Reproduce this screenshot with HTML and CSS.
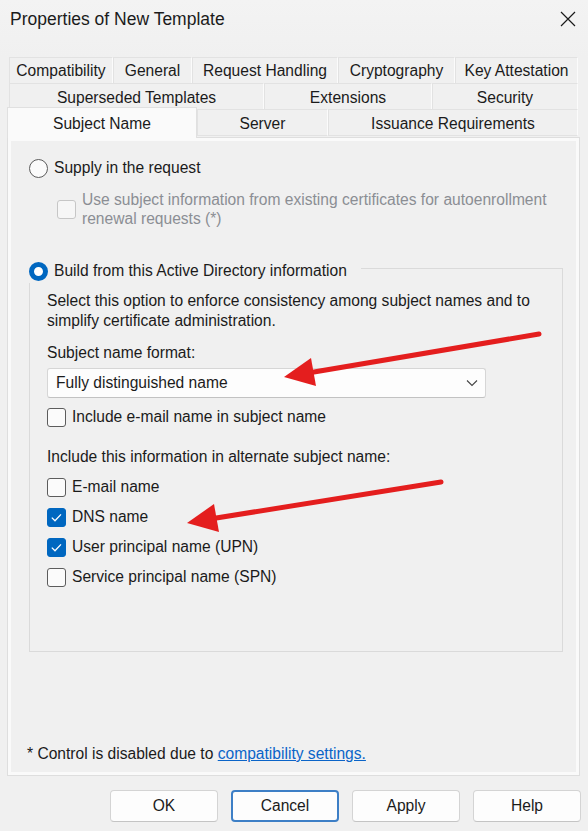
FILE: index.html
```html
<!DOCTYPE html>
<html lang="en">
<head>
    <meta charset="UTF-8">
    <title>Properties of New Template</title>
    <link rel="stylesheet" href="styles.css">
</head>
<body>
    <div class="dialog">
        <div class="titlebar">
            <span class="title">Properties of New Template</span>
            <svg class="close" width="16" height="16" viewBox="0 0 16 16">
                <path d="M1 1L15 15M15 1L1 15" stroke="#1a1a1a" stroke-width="1.2" fill="none"/>
            </svg>
        </div>

        <div class="tabs">
            <div class="tab-row row-1">
                <div class="tab">Compatibility</div>
                <div class="tab">General</div>
                <div class="tab">Request Handling</div>
                <div class="tab">Cryptography</div>
                <div class="tab">Key Attestation</div>
            </div>
            <div class="tab-row row-2">
                <div class="tab">Superseded Templates</div>
                <div class="tab">Extensions</div>
                <div class="tab">Security</div>
            </div>
            <div class="tab-row row-3">
                <div class="tab active">Subject Name</div>
                <div class="tab">Server</div>
                <div class="tab">Issuance Requirements</div>
            </div>
        </div>

        <div class="panel">
            <label class="option">
                <span class="radio"></span>
                <span>Supply in the request</span>
            </label>

            <label class="option sub disabled">
                <span class="check"></span>
                <span class="label-text">Use subject information from existing certificates for autoenrollment renewal requests (*)</span>
            </label>

            <div class="group">
                <label class="option legend">
                    <span class="radio checked"></span>
                    <span>Build from this Active Directory information</span>
                </label>

                <p class="hint">Select this option to enforce consistency among subject names and to simplify certificate administration.</p>

                <div class="field-label">Subject name format:</div>
                <div class="select">
                    <span>Fully distinguished name</span>
                    <svg width="12" height="8" viewBox="0 0 12 8">
                        <path d="M1 1.5L6 6.5L11 1.5" stroke="#444" stroke-width="1.1" fill="none"/>
                    </svg>
                </div>

                <label class="option box-row">
                    <span class="check"></span>
                    <span>Include e-mail name in subject name</span>
                </label>

                <div class="field-label alt">Include this information in alternate subject name:</div>

                <div class="check-list">
                    <label class="option box-row">
                        <span class="check"></span>
                        <span>E-mail name</span>
                    </label>
                    <label class="option box-row">
                        <span class="check checked"></span>
                        <span>DNS name</span>
                    </label>
                    <label class="option box-row">
                        <span class="check checked"></span>
                        <span>User principal name (UPN)</span>
                    </label>
                    <label class="option box-row">
                        <span class="check"></span>
                        <span>Service principal name (SPN)</span>
                    </label>
                </div>
            </div>

            <div class="footnote">* Control is disabled due to <a href="#">compatibility settings.</a></div>
        </div>

        <div class="buttons">
            <button>OK</button>
            <button class="focused">Cancel</button>
            <button>Apply</button>
            <button>Help</button>
        </div>

        <!-- red callout arrows drawn over the dialog -->
        <svg class="callouts" width="588" height="831" viewBox="0 0 588 831">
            <line x1="539" y1="334" x2="308" y2="373" stroke="#e41e1e" stroke-width="5" stroke-linecap="round"/>
            <polygon points="284,377 316,386 311,358" fill="#e41e1e"/>
            <line x1="441" y1="482" x2="210" y2="519" stroke="#e41e1e" stroke-width="5" stroke-linecap="round"/>
            <polygon points="187,523 219,532 214,504" fill="#e41e1e"/>
        </svg>
    </div>
</body>
</html>
```

FILE: styles.css
```css
* {
    box-sizing: border-box;
}

body {
    margin: 0;
    background: #f0f0f0;
    font-family: "Liberation Sans", Arial, sans-serif;
    font-size: 15.6px;
    color: #1b1b1b;
}

.dialog {
    position: relative;
    width: 588px;
    height: 831px;
    background: #f0f0f0;
}

.titlebar {
    height: 57px;
    display: flex;
    align-items: flex-start;
    justify-content: space-between;
    padding: 10px 10px 0 10px;
    background: linear-gradient(#f3f3f3, #f0f0f0);
}

.title {
    font-size: 17.5px;
    line-height: 19px;
}

.close {
    margin-top: 1px;
    margin-right: 2px;
}

/* tab strip */
.tab-row {
    display: grid;
    margin-left: 9px;
    width: 569px;
}

.row-1 {
    grid-template-columns: 104px 79px 146px 117px 123px;
}

.row-2 {
    grid-template-columns: 255px 168px 146px;
}

.row-3 {
    grid-template-columns: 188px 131px 250px;
}

.tab {
    height: 27px;
    line-height: 26px;
    text-align: center;
    border: 1px solid #e2e2e2;
    border-right-color: #fbfbfb;
    background: #f0f0f0;
    margin-top: -1px;
    white-space: nowrap;
}

.row-1 .tab {
    margin-top: 0;
}

.row-2 .tab,
.row-3 .tab {
    line-height: 27px;
}

.tab.active {
    background: #fafafa;
    border-color: #e0e0e0;
    border-bottom: none;
    margin-left: -2px;
    margin-top: -3px;
    height: 31px;
    line-height: 31px;
    position: relative;
    z-index: 1;
    margin-bottom: -1px;
}

/* page area */
.panel {
    margin-left: 7px;
    width: 573px;
    height: 639px;
    border: 1px solid #dedede;
    box-shadow: inset 0 0 0 3px #fafafa;
    padding: 20px 16px 11px 21px;
    display: flex;
    flex-direction: column;
}

.option {
    display: flex;
    align-items: center;
    gap: 6px;
    line-height: 20px;
}

.radio {
    width: 19px;
    height: 19px;
    flex: none;
    border-radius: 50%;
    border: 1px solid #5c5c5c;
    background: #fbfbfb;
}

.radio.checked {
    border: 5.5px solid #0067c0;
    background: #fff;
}

.check {
    width: 19px;
    height: 19px;
    flex: none;
    border-radius: 3px;
    border: 1px solid #5c5c5c;
    background: #fbfbfb;
}

.check.checked {
    border-color: #0067c0;
    background: #0067c0 url("data:image/svg+xml,%3Csvg xmlns='http://www.w3.org/2000/svg' width='19' height='19' viewBox='0 0 19 19'%3E%3Cpath d='M4.8 9.6L8 12.8L14 6.4' stroke='white' stroke-width='1.3' fill='none'/%3E%3C/svg%3E") center / 19px 19px no-repeat;
}

.sub {
    margin-top: 12px;
    margin-left: 28px;
    line-height: 19px;
}

.disabled {
    color: #8b8e94;
}

.disabled .check {
    border-color: #c6c6c6;
    background: #f6f6f6;
}

.label-text {
    max-width: 480px;
}

/* group box with the radio sitting on its top-left corner */
.group {
    margin-top: 40px;
    border: 1px solid #dadada;
    height: 384px;
    padding: 0 0 0 17px;
}

.legend {
    width: fit-content;
    margin: -11px 0 0 -18px;
    padding: 3px 14px 2px 0;
    background: #f0f0f0;
}

.hint {
    margin: 8px 0 0;
    line-height: 20px;
    max-width: 505px;
}

.field-label {
    margin-top: 12px;
    line-height: 20px;
}

.field-label.alt {
    margin-top: 20px;
}

.select {
    margin-top: 5px;
    width: 439px;
    height: 30px;
    display: flex;
    align-items: center;
    justify-content: space-between;
    padding: 0 7px 0 8px;
    background: #fdfdfd;
    border: 1px solid #d6d6d6;
    border-bottom-color: #c2c2c2;
    border-radius: 3px;
}

.box-row {
    margin-top: 9px;
}

.check-list {
    display: flex;
    flex-direction: column;
    gap: 10px;
    margin-top: 10px;
}

.check-list .box-row {
    margin-top: 0;
}

.footnote {
    margin-top: auto;
    margin-left: -2px;
    line-height: 20px;
}

.footnote a {
    color: #0a64c8;
}

/* dialog buttons */
.buttons {
    display: flex;
    justify-content: flex-end;
    gap: 13px;
    padding: 14px 7px 0 0;
}

.buttons button {
    width: 108px;
    height: 32px;
    font: inherit;
    color: #1b1b1b;
    background: #fdfdfd;
    border: 1px solid #d4d4d4;
    border-bottom-color: #c4c4c4;
    border-radius: 4px;
}

.buttons button.focused {
    border: 2px solid #3d7fc6;
}

.callouts {
    position: absolute;
    left: 0;
    top: 0;
    pointer-events: none;
}
```
